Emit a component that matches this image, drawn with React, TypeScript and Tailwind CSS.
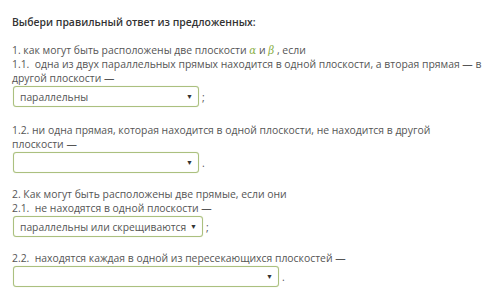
const Select: React.FC<{ value?: string; width: string; after: string }> = ({ value, width, after }) => {
  return (
    <div className="flex items-center h-[21px] mt-px">
      <div
        className={`${width} h-[21px] ml-px flex items-center justify-between border border-[#abc07f] rounded-[3px] bg-white pl-[6px] pr-[5px] shadow-[0_0_1px_#c9d8a8,inset_0_0_1px_#dde7c8]`}
      >
        <span className="text-[10.3px] text-[#555] whitespace-nowrap">{value}</span>
        <span className="text-[7px] text-[#333]">▼</span>
      </div>
      <span className="ml-[3px] text-[10.4px] text-[#555]">{after}</span>
    </div>
  );
};

const App: React.FC = () => {
  return (
    <div
      className="w-[500px] h-[297px] bg-white pl-3 pt-[15px] text-[10.4px] leading-[14px] text-[#555] overflow-hidden whitespace-nowrap"
      style={{ fontFamily: '"Open Sans", "Noto Sans", sans-serif' }}
    >
      <p className="font-semibold text-[#333]">Выбери правильный ответ из предложенных:</p>

      <div className="mt-[14px]">
        <p>
          1. как могут быть расположены две плоскости{" "}
          <span className="italic text-[#8cb04a]" style={{ fontFamily: '"DejaVu Serif", serif' }}>α</span> и{" "}
          <span className="italic text-[#8cb04a]" style={{ fontFamily: '"DejaVu Serif", serif' }}>β</span> , если
        </p>
        <p>1.1.&nbsp; одна из двух параллельных прямых находится в одной плоскости, а вторая прямая — в</p>
        <p>другой плоскости —</p>
        <Select value="параллельны" width="w-[186px]" after=";" />
      </div>

      <div className="mt-[16px]">
        <p>1.2. ни одна прямая, которая находится в одной плоскости, не находится в другой</p>
        <p>плоскости —</p>
        <Select width="w-[186px]" after="." />
      </div>

      <div className="mt-[14px]">
        <p>2. Как могут быть расположены две прямые, если они</p>
        <p>2.1.&nbsp; не находятся в одной плоскости —</p>
        <Select value="параллельны или скрещиваются" width="w-[190px]" after=";" />
      </div>

      <div className="mt-[14px]">
        <p>2.2.&nbsp; находятся каждая в одной из пересекающихся плоскостей —</p>
        <Select width="w-[266px]" after="." />
      </div>
    </div>
  );
};

export default App;
